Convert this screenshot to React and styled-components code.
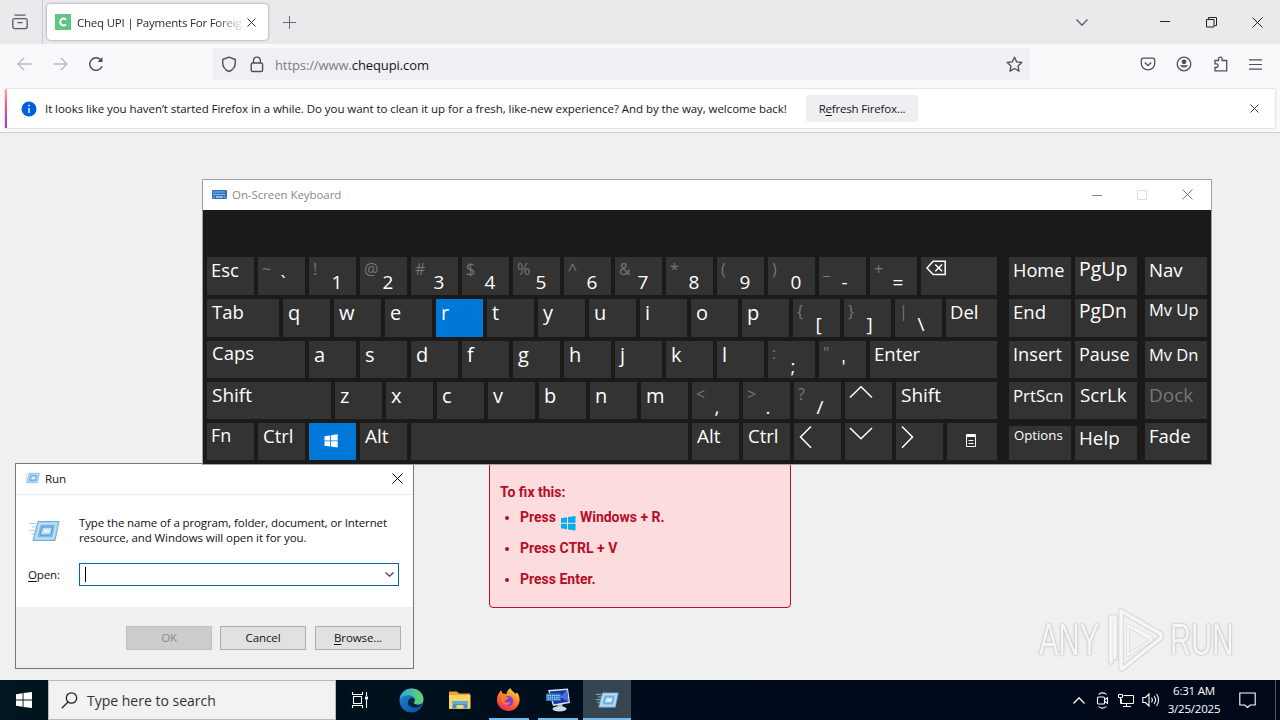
import styled, { createGlobalStyle } from 'styled-components';

const rows = [
	[
		{ label: 'Esc', w: 47 },
		{ dim: '~', main: '`' },
		{ dim: '!', main: '1' },
		{ dim: '@', main: '2' },
		{ dim: '#', main: '3' },
		{ dim: '$', main: '4' },
		{ dim: '%', main: '5' },
		{ dim: '^', main: '6' },
		{ dim: '&', main: '7' },
		{ dim: '*', main: '8' },
		{ dim: '(', main: '9' },
		{ dim: ')', main: '0' },
		{ dim: '_', main: '-' },
		{ dim: '+', main: '=' },
		{ icon: 'back', w: 76 },
	],
	[
		{ label: 'Tab', w: 72, x: 1 },
		...'qwertyuiop'.split('').map((c) => ({ letter: c, on: c === 'r' })),
		{ dim: '{', main: '[' },
		{ dim: '}', main: ']' },
		{ dim: '|', main: '\\' },
		{ label: 'Del', w: 51 },
	],
	[
		{ label: 'Caps', w: 98, x: 1, up: 1 },
		...'asdfghjkl'.split('').map((c) => ({ letter: c })),
		{ dim: ':', main: ';' },
		{ dim: '"', main: "'" },
		{ label: 'Enter', w: 127 },
	],
	[
		{ label: 'Shift', w: 124, size: 19, x: 1 },
		...'zxcvbnm'.split('').map((c) => ({ letter: c })),
		{ dim: '<', main: ',' },
		{ dim: '>', main: '.' },
		{ dim: '?', main: '/' },
		{ icon: 'up' },
		{ label: 'Shift', w: 101, size: 19, x: 1 },
	],
	[
		{ label: 'Fn', size: 18, up: 1 },
		{ label: 'Ctrl', x: 1 },
		{ icon: 'win', on: true },
		{ label: 'Alt', size: 19, x: 1 },
		{ w: 277 },
		{ label: 'Alt', size: 19, x: 1 },
		{ label: 'Ctrl', x: 1 },
		{ icon: 'left' },
		{ icon: 'down' },
		{ icon: 'right' },
		{ icon: 'menu', w: 50 },
	],
];

const navKeys = [
	[{ label: 'Home', size: 18.2 }, { label: 'PgUp', size: 19.5, up: 0.6 }, { label: 'Nav', size: 18.6 }],
	[{ label: 'End' }, { label: 'PgDn', size: 19.2, up: 0.6 }, { label: 'Mv Up', size: 16.5, up: 2 }],
	[{ label: 'Insert', size: 18.2 }, { label: 'Pause', size: 18 }, { label: 'Mv Dn', size: 16.5, up: -1 }],
	[{ label: 'PrtScn', size: 16.8, up: -1 }, { label: 'ScrLk', size: 18.8, x: 1 }, { label: 'Dock', size: 19, off: true }],
	[
		{ label: 'Options', size: 13.2, short: true, up: 4, x: 1 },
		{ label: 'Help', size: 18.8, short: true, up: 1 },
		{ label: 'Fade' },
	],
];

const KeyIcon = ({ name }) => {
	if (name === 'win') {
		return (
			<svg width='47' height='37' fill='#fff'>
				<path d='M15.500 13.200l5.600-.8v5.200h-5.600zM21.900 12.300l6.800-1v6.300h-6.800zM15.500 18.300h5.600v5.200l-5.600-.8zM21.900 18.300h6.800v6.300l-6.800-1z' />
			</svg>
		);
	}
	if (name === 'menu') {
		return (
			<svg width='50' height='37' fill='none' stroke='#fff'>
				<path d='M19.5 11.5h9v12h-9z' />
				<path d='M19 12.5h10M19 13.5h10M21.5 17.5h5M21.5 20.5h5' />
			</svg>
		);
	}
	const paths = {
		back: 'M6 11L12.200 4.200h12v13.300h-12zM14.300 7.500l6.800 6.800M21.100 7.500l-6.800 6.800',
		up: 'M5 15.500L16 4.700l11 10.800',
		down: 'M5 5L16 15.800 27 5',
		left: 'M17 3.500L6.500 14 17 24.700',
		right: 'M6 3.500L16.500 14 6 24.700',
	};
	return (
		<svg width='47' height='37' fill='none' stroke='#fff' strokeWidth='1.500'>
			<path d={paths[name]} />
		</svg>
	);
};

const KeyCap = ({ k, w }) => (
	<Key $w={k.w || w} $on={k.on} $short={k.short}>
		{k.label && (
			<Label $size={k.size} $up={k.up} $x={k.x} $off={k.off}>
				{k.label}
			</Label>
		)}
		{k.letter && <Letter>{k.letter}</Letter>}
		{k.dim && <Dim>{k.dim}</Dim>}
		{k.main && <Main>{k.main}</Main>}
		{k.icon && <KeyIcon name={k.icon} />}
	</Key>
);

const RunIcon = ({ size }) => (
	<svg width={size} height={size} viewBox='0 0 32 32'>
		<path d='M10 6.500h21l-4 19H5z' fill='#a9d3f0' stroke='#6aaedd' />
		<path d='M12 9h16l-3 14H8.500z' fill='#7fbbe6' stroke='#d6ebf9' />
		<path d='M14.500 12h10l-1.800 8H12z' fill='#bfdff5' stroke='#4b93cb' />
		<path d='M16.200 14.500h5.500l-.7 3h-5.500z' fill='#e8f4fc' />
		<path d='M1 8.500h7M4 12h4M1 15.500h6M3 19h3' stroke='#a9d3f0' />
	</svg>
);

const Chevron = ({ w, h, color, up, stroke = 1.3 }) => (
	<svg width={w} height={h} fill='none' stroke={color} strokeWidth={stroke}>
		<path d={up ? `M.5 ${h - 0.5}L${w / 2} .8 ${w - 0.5} ${h - 0.5}` : `M.5 .5L${w / 2} ${h - 0.8} ${w - 0.5} .5`} />
	</svg>
);

const Cross = ({ size, color }) => (
	<svg width={size} height={size} fill='none' stroke={color} strokeWidth='1'>
		<path d={`M.5 .5L${size - 0.5} ${size - 0.5}M${size - 0.5} .5L.5 ${size - 0.5}`} />
	</svg>
);

const Browser = () => (
	<BrowserWindow>
		<TabStrip>
			<FirefoxView>
				<svg width='16' height='16' fill='none' stroke='#5b5b66' strokeWidth='1.3'>
					<rect x='.8' y='4.6' width='14.4' height='10' rx='2' />
					<path d='M2.5 1.2h11M5.5 8.6h5' />
				</svg>
			</FirefoxView>
			<Tab>
				<Favicon>
					<svg width='16' height='16'>
						<path d='M11 5.6A3.4 3.4 0 1 0 11 10.4' fill='none' stroke='#fff' strokeWidth='2' />
					</svg>
				</Favicon>
				<TabTitle>Cheq UPI | Payments For Foreig</TabTitle>
				<Cross size={9} color='#3a3944' />
			</Tab>
			<NewTab>
				<svg width='13' height='13' stroke='#6b6b76'>
					<path d='M6.500 0v13M0 6.500h13' />
				</svg>
			</NewTab>
			<WindowControls>
				<Chevron w={12} h={7} color='#5b5b66' />
				<svg width='10' height='10' stroke='#222'>
					<path d='M0 4.500h10' />
				</svg>
				<svg width='11' height='11' fill='none' stroke='#222'>
					<path d='M.5 2.500h7.500v7.500h-7.500zM2.500 2.500v-2h8v8h-2' />
				</svg>
				<Cross size={11} color='#222' />
			</WindowControls>
		</TabStrip>
		<Toolbar>
			<NavButtons>
				<svg width='15' height='14' fill='none' stroke='#b9b9c1' strokeWidth='1.4'>
					<path d='M14.500 7H1M7 1L1 7l6 6' />
				</svg>
				<svg width='15' height='14' fill='none' stroke='#b9b9c1' strokeWidth='1.4'>
					<path d='M.5 7H14M8 1l6 6-6 6' />
				</svg>
				<svg width='16' height='16' fill='none' stroke='#4a4a54' strokeWidth='1.400'>
					<path d='M12.500 3.600A6.300 6.300 0 1 0 14 10.200' />
					<path d='M14.500 1v5h-5z' fill='#4a4a54' stroke='none' />
				</svg>
			</NavButtons>
			<UrlBar>
				<svg width='16' height='17' fill='none' stroke='#4f4f59' strokeWidth='1.4'>
					<path d='M8 1.200l6.300 2.300v3.300c0 4-2.500 7.200-6.300 8.700-3.800-1.500-6.300-4.700-6.300-8.700V3.500z' strokeLinejoin='round' />
				</svg>
				<svg width='14' height='17' fill='none' stroke='#4f4f59' strokeWidth='1.4'>
					<rect x='1.200' y='7' width='11.400' height='8.500' rx='1.500' />
					<path d='M3.500 7V4.500a3.400 3.400 0 0 1 6.800 0V7' />
				</svg>
				<Url>
					https://www.<b>chequpi.com</b>
				</Url>
				<svg width='17' height='17' fill='none' stroke='#4f4f59' strokeWidth='1.3' strokeLinejoin='round'>
					<path d='M8.500 1.200l2.200 4.700 5.100.6-3.800 3.500 1 5.100-4.500-2.600-4.500 2.600 1-5.100L1.200 6.500l5.100-.6z' />
				</svg>
			</UrlBar>
			<Actions>
				<svg width='16' height='16' fill='none' stroke='#4f4f59' strokeWidth='1.300'>
					<path d='M3 2.200h10a1.700 1.700 0 0 1 1.700 1.700V7.500a6.700 6.300 0 0 1-13.400 0V3.900A1.700 1.700 0 0 1 3 2.200z' />
					<path d='M4.800 6.500L8 9.500l3.200-3' />
				</svg>
				<svg width='16' height='16'>
					<circle cx='8' cy='8' r='6.800' fill='none' stroke='#4f4f59' strokeWidth='1.300' />
					<circle cx='8' cy='5.800' r='2.400' fill='#4f4f59' />
					<path d='M3.800 9.200h8.400a4.700 4.200 0 0 1-8.400 0z' fill='#4f4f59' />
				</svg>
				<svg width='16' height='16' fill='none' stroke='#4f4f59' strokeWidth='1.300'>
					<path d='M2 4.500h3.500V3a1.800 1.800 0 0 1 3.600 0v1.500h4.600v10.300H2V11.500h1.300a1.800 1.800 0 0 0 0-3.600H2z' />
				</svg>
				<svg width='13' height='11' stroke='#4f4f59' strokeWidth='1.200'>
					<path d='M0 .9h13M0 5.500h13M0 10.100h13' />
				</svg>
			</Actions>
		</Toolbar>
		<NoticeArea>
			<Notice>
				<svg width='16' height='16'>
					<circle cx='8' cy='8' r='7.500' fill='#0060df' />
					<path d='M8 7v5' stroke='#fff' strokeWidth='1.400' />
					<circle cx='8' cy='4.600' r='.9' fill='#fff' />
				</svg>
				<NoticeText>
					It looks like you haven’t started Firefox in a while. Do you want to clean it up for a fresh, like-new experience? And by
					the way, welcome back!
				</NoticeText>
				<RefreshButton>
					<span>
						R<u>e</u>fresh Firefox...
					</span>
				</RefreshButton>
				<Cross size={9} color='#3a3944' />
			</Notice>
		</NoticeArea>
		<Page>
			<FixBox>
				<p>To fix this:</p>
				<ul>
					<li>
						Press{' '}
						<svg width='16' height='16' fill='#00adef'>
							<path d='M1 3.200l6-.9v5.500H1zM8 2.100L15.500 1v6.800H8zM1 8.700h6v5.500l-6-.9zM8 8.700h7.500v6.800L8 14.400z' />
						</svg>{' '}
						Windows + R.
					</li>
					<li>Press CTRL + V</li>
					<li>Press Enter.</li>
				</ul>
			</FixBox>
		</Page>
	</BrowserWindow>
);

const RunDialog = () => (
	<RunWindow>
		<RunTitle>
			<RunIcon size={16} />
			<span>Run</span>
			<Cross size={11} color='#000' />
		</RunTitle>
		<RunBody>
			<RunIntro>
				<RunIcon size={32} />
				<p>
					Type the name of a program, folder, document, or Internet
					<br />
					<RunSecondLine>resource, and Windows will open it for you.</RunSecondLine>
				</p>
			</RunIntro>
			<OpenRow>
				<span>
					<u>O</u>pen:
				</span>
				<Combo>
					<Caret />
					<Chevron w={9} h={5} color='#444' />
				</Combo>
			</OpenRow>
		</RunBody>
		<RunFooter>
			<RunButton $off>OK</RunButton>
			<RunButton>Cancel</RunButton>
			<RunButton $last>
				<u>B</u>rowse...
			</RunButton>
		</RunFooter>
	</RunWindow>
);

const Keyboard = () => (
	<KeyboardWindow>
		<KeyboardTitle>
			<svg width='15' height='9'>
				<rect width='15' height='9' rx='1' fill='#2b6fc0' />
				<path d='M1.500 2h12M1.500 4.500h12' stroke='#fff' strokeDasharray='1 1' />
				<path d='M1.500 7h1M4 7h7M12.500 7h1' stroke='#fff' />
			</svg>
			<span>On-Screen Keyboard</span>
			<KeyboardControls>
				<svg width='10' height='10' stroke='#888'>
					<path d='M0 5.500h10' />
				</svg>
				<svg width='10' height='10' fill='none' stroke='#ddd'>
					<path d='M.5 .5h9v9h-9z' />
				</svg>
				<Cross size={11} color='#777' />
			</KeyboardControls>
		</KeyboardTitle>
		<KeyArea>
			<MainKeys>
				{rows.map((row, i) => (
					<KeyRow key={i} $h={i < 2 ? 38 : 37}>
						{row.map((k, j) => (
							<KeyCap key={j} k={k} w={47} />
						))}
					</KeyRow>
				))}
			</MainKeys>
			<SideKeys>
				{navKeys.map((row, i) => (
					<KeyRow key={i} $h={i < 2 ? 38 : 37} $side>
						{row.map((k) => (
							<KeyCap key={k.label} k={k} w={62} />
						))}
					</KeyRow>
				))}
			</SideKeys>
		</KeyArea>
	</KeyboardWindow>
);

const Watermark = () => (
	<Mark>
		<span>ANY</span>
		<svg width='58' height='66' fill='none' strokeLinejoin='round' strokeLinecap='round'>
			<path d='M14 61V4l40 23v4L15 62M4 55V10h4v41' stroke='#d6d6d6' strokeWidth='5.500' />
			<path d='M14 61V4l40 23v4L15 62M4 55V10h4v41' stroke='#f6f6f6' strokeWidth='3.500' />
			<path d='M21 19v29l24-15zM21 19l24 11' stroke='#d9d9d9' strokeWidth='3.500' />
			<path d='M21 19v29l24-15zM21 19l24 11' stroke='#f8f8f8' strokeWidth='2' />
		</svg>
		<span>RUN</span>
	</Mark>
);

const Taskbar = () => (
	<Bar>
		<Start>
			<svg width='16' height='16' fill='#fff'>
				<path d='M0 2.200l6.600-.9v6.200H0zM7.500 1.100L16 0v7.500H7.500zM0 8.500h6.600v6.200L0 13.800zM7.500 8.500H16V16l-8.500-1.100z' />
			</svg>
		</Start>
		<Search>
			<svg width='17' height='17' fill='none' stroke='#222' strokeWidth='1.300'>
				<circle cx='10.500' cy='6' r='5.200' />
				<path d='M7 10L.8 16.300' />
			</svg>
			<span>Type here to search</span>
		</Search>
		<Task $w={48}>
			<svg width='18' height='16' fill='none' stroke='#fff' strokeWidth='1.100'>
				<path d='M1.500 0v2.500h10V0M1.500 16v-2.500h10V16M2.500 4.500h8v7h-8zM15.500 0v4M15.500 8v8' />
				<path d='M14 4.500h3v3h-3z' fill='#fff' stroke='none' />
			</svg>
		</Task>
		<Task $w={54}>
			<svg width='25' height='25' viewBox='0 0 24 24'>
				<defs>
					<linearGradient id='edgeTop' x1='0' x2='1'>
						<stop offset='0' stopColor='#2aa9dc' />
						<stop offset='1' stopColor='#66d663' />
					</linearGradient>
					<linearGradient id='edgeSide' x2='1' y2='1'>
						<stop offset='0' stopColor='#1b8bd8' />
						<stop offset='1' stopColor='#0d4a92' />
					</linearGradient>
				</defs>
				<circle cx='12' cy='12' r='11.500' fill='url(#edgeSide)' />
				<path d='M.6 11C1.500 4.500 6.500.5 12 .5c6.500 0 11.500 4.700 11.500 10 0 3.500-2.500 5.500-5.500 5.500-2.500 0-3.800-1-3.800-1.800 0-.7 1-1.200 1-3 0-2.200-2.300-4.300-5.700-4.300C5.500 6.900 2 9 .6 11z' fill='url(#edgeTop)' />
				<path d='M8.500 14c0-2 1.500-4 3.700-4.600 1.600.1 3 1 3 2.200 0 1.300-1 1.800-1 2.600 0 1 1.500 1.900 4 1.900 2 0 3.300-.4 4.200-1-.9 1.800-2.300 3-4.400 3.400C13.500 19.400 8.500 18 8.500 14z' fill='#06243c' />
			</svg>
		</Task>
		<Task $w={43}>
			<svg width='22' height='20'>
				<path d='M0 1.500h8l2 2h11V19H0z' fill='#e9a825' />
				<path d='M0 5h21.500v13.500H0z' fill='#fbd566' />
				<path d='M3.500 18.500V11h15v7.500h-4V15h-7v3.500z' fill='#3f94d1' />
				<path d='M3.500 11h15v3h-15z' fill='#60aede' />
			</svg>
		</Task>
		<Task $w={55} $open>
			<svg width='25' height='24'>
				<defs>
					<linearGradient id='fox' x1='.8' x2='.3' y2='1'>
						<stop offset='0' stopColor='#ffe441' />
						<stop offset='.4' stopColor='#ff8a20' />
						<stop offset='1' stopColor='#f0235b' />
					</linearGradient>
				</defs>
				<path d='M3 5l2-3 1.500 3.500 4 .5c.5-2.500 2-5 4-6 .3 2.500 4 4 5 6l1.500-1.500c2 2.500 3 5.500 2.500 8.500-.8 6-5.500 10-11 10S1.500 19 1 13C.8 10 1.500 7 3 5z' fill='url(#fox)' />
				<circle cx='12.300' cy='13' r='5' fill='#7a3fe0' />
				<path d='M6 7.500c3 0 4 1.500 7 2.200-1 2-3.500 1.500-4.500 3.500 1 2 5 1.500 6 .3 0 3.500-5 4.500-7.500 1.800C5.500 13.500 5 10 6 7.500z' fill='#ff7a2b' />
			</svg>
		</Task>
		<Task $w={44} $open>
			<svg width='26' height='24'>
				<path d='M12 15l5-1 1 7h-5z' fill='#aeb7bf' />
				<ellipse cx='14.500' cy='20.800' rx='7' ry='2.600' fill='#d3d8dc' />
				<path d='M3 2L23 .5l2 14.500-17 3z' fill='#dce6ef' />
				<path d='M4.500 3.400l17.500-1.500 1.500 11.800-14.500 2.500z' fill='#1a35a8' />
				<path d='M15 9l7-7 1.500 11.700z' fill='#496fdc' />
				<rect x='1' y='5.500' width='15' height='7.500' rx='1' fill='#287bc6' />
				<path d='M2.500 7.500h12M2.500 9.300h12M2.500 11.200h12' stroke='#cfe4f7' strokeDasharray='1.200 1' />
			</svg>
		</Task>
		<Task $w={48} $active>
			<RunIcon size={24} />
		</Task>
		<Tray>
			<Chevron w={12} h={7} color='#fff' up />
			<svg width='14' height='17' fill='none' stroke='#fff' strokeWidth='1.100'>
				<rect x='1.500' y='5' width='7' height='7' rx='1' />
				<path d='M8.500 7.700l3-2v5.600l-3-2M2.500 2.500C4.500.3 8.500.3 10.500 2.500M2.500 14.500c2 2.200 6 2.200 8 0' />
			</svg>
			<svg width='17' height='15' fill='none' stroke='#fff'>
				<path d='M5.500 2.500h10v8h-12V6M8.500 10.500v3M5 13.500h8' />
				<path d='M.5 1.500h4v3h-4zM2.500 4.500v6h2' />
			</svg>
			<svg width='18' height='14' fill='none' stroke='#fff' strokeWidth='1.100'>
				<path d='M.8 4.500h2.700L7 1v12L3.500 9.500H.8zM9.500 4.800c1 1.300 1 3.200 0 4.500M12 3c2 2.500 2 5.500 0 8M14.500 1c2.700 3.500 2.700 8.500 0 12' />
			</svg>
		</Tray>
		<Clock>
			<span>6:31 AM</span>
			<span>3/25/2025</span>
		</Clock>
		<Notifications>
			<svg width='17' height='17' fill='none' stroke='#fff' strokeWidth='1.100'>
				<path d='M.8 1h15.400v12h-5L8.500 15.500 5.800 13h-5z' />
			</svg>
		</Notifications>
	</Bar>
);

const App = () => (
	<Desktop>
		<GlobalStyle />
		<Browser />
		<RunDialog />
		<Keyboard />
		<Watermark />
		<Taskbar />
	</Desktop>
);

const GlobalStyle = createGlobalStyle`
	* {
		box-sizing: border-box;
	}

	body {
		margin: 0;
		font-family: 'Open Sans', 'Noto Sans', sans-serif;
	}

	p, ul {
		margin: 0;
		padding: 0;
	}

	svg {
		flex: none;
		display: block;
	}

	u {
		text-underline-offset: 2px;
	}
`;

const Desktop = styled.div`
	position: relative;
	width: 1280px;
	height: 720px;
	overflow: hidden;
	display: flex;
	flex-direction: column;
	white-space: nowrap;
`;

const BrowserWindow = styled.div`
	flex: 1;
	display: flex;
	flex-direction: column;
	background: #f9f9fb;
`;

const TabStrip = styled.div`
	height: 44px;
	background: #eaeaed;
	display: flex;
	align-items: center;
`;

const FirefoxView = styled.div`
	width: 43px;
	height: 44px;
	padding: 14px 0 0 12px;
	border-right: 1px solid #c9c9ce;
`;

const Tab = styled.div`
	width: 221px;
	height: 36px;
	margin-left: 4px;
	padding: 0 11px 0 8px;
	border-radius: 4px;
	background: #fff;
	box-shadow: 0 0 3px rgba(0, 0, 0, 0.4);
	display: flex;
	align-items: center;
`;

const Favicon = styled.div`
	width: 16px;
	height: 16px;
	background: #62c584;
`;

const TabTitle = styled.div`
	width: 168px;
	margin: 0 2px 0 6px;
	font-size: 11.5px;
	letter-spacing: -0.22px;
	color: #2b2a33;
	mask-image: linear-gradient(to left, transparent, #000 30px);
`;

const NewTab = styled.div`
	margin-left: 15px;
`;

const WindowControls = styled.div`
	margin: 0 17px 0 auto;
	display: flex;
	align-items: center;

	svg:nth-child(2) {
		margin-left: 72px;
	}

	svg:nth-child(3) {
		margin-left: 36px;
	}

	svg:nth-child(4) {
		margin-left: 35px;
	}
`;

const Toolbar = styled.div`
	height: 40px;
	display: flex;
	align-items: center;
`;

const NavButtons = styled.div`
	width: 213px;
	padding-left: 17px;
	display: flex;
	align-items: center;
	gap: 20.5px;
`;

const UrlBar = styled.div`
	width: 817px;
	height: 32px;
	padding: 0 7px 0 8px;
	background: #f0f0f4;
	display: flex;
	align-items: center;
	gap: 13px;
`;

const Url = styled.div`
	flex: 1;
	margin: 2px 0 0 -2px;
	font-size: 13px;
	letter-spacing: -0.1px;
	color: #7c7c85;

	b {
		font-weight: 400;
		color: #15141a;
	}
`;

const Actions = styled.div`
	flex: 1;
	padding: 0 18px 0 110px;
	display: flex;
	align-items: center;
	justify-content: space-between;
`;

const NoticeArea = styled.div`
	height: 49px;
	padding: 5px 5px 5px;
	border-bottom: 1px solid #ccccd0;
`;

const Notice = styled.div`
	height: 39px;
	padding: 0 16px 0 14px;
	border-left: 2px solid;
	border-image: linear-gradient(#ffb173, #f2558f 40%, #8341ca) 1;
	background: #fff;
	box-shadow: 0 0 2px rgba(0, 0, 0, 0.25);
	display: flex;
	align-items: center;

	> svg:last-child {
		margin-left: auto;
	}
`;

const NoticeText = styled.div`
	margin-left: 8px;
	width: 761px;
	font-size: 11.5px;
	letter-spacing: -0.058px;
	color: #15141a;
`;

const RefreshButton = styled.div`
	width: 112px;
	height: 27px;
	border-radius: 3px;
	background: #efeff2;
	display: flex;
	align-items: center;
	justify-content: center;
	font-size: 11.5px;
	letter-spacing: -0.18px;
	color: #15141a;
`;

const Page = styled.div`
	flex: 1;
	padding: 150px 0 0 489px;
	background: #f0f0f0;
`;

const FixBox = styled.div`
	width: 302px;
	height: 325px;
	padding: 200px 10px 0;
	border: 1px solid #b5142e;
	border-radius: 4px;
	background: #fddcdd;
	font: 700 14px/17px Roboto, sans-serif;
	color: #b50d28;

	ul {
		padding: 8px 0 0 20px;
	}

	li {
		height: 17px;
		margin-bottom: 14px;
	}

	svg {
		display: inline-block;
		vertical-align: -9px;
		margin: 0 0.5px;
	}
`;

const RunWindow = styled.div`
	position: absolute;
	left: 15px;
	top: 463px;
	width: 399px;
	height: 206px;
	border: 1px solid #777;
	background: #fff;
	display: flex;
	flex-direction: column;
	font-size: 11.5px;
	letter-spacing: -0.12px;
	color: #111;
`;

const RunTitle = styled.div`
	height: 31px;
	padding: 0 10px 2px 8px;
	border-bottom: 1px solid #ececec;
	display: flex;
	align-items: center;

	span {
		flex: 1;
		margin-left: 5px;
	}
`;

const RunBody = styled.div`
	flex: 1;
	padding: 20px 14px 0 12px;
`;

const RunIntro = styled.div`
	display: flex;
	gap: 19px;
	line-height: 15px;
`;

const RunSecondLine = styled.span`
	letter-spacing: -0.08px;
`;

const OpenRow = styled.div`
	margin-top: 16px;
	display: flex;
	align-items: center;
	justify-content: space-between;
`;

const Combo = styled.div`
	width: 320px;
	height: 23px;
	padding: 0 4px 0 5px;
	border: 1px solid #0067b3;
	display: flex;
	align-items: center;
	justify-content: space-between;
`;

const Caret = styled.div`
	width: 1px;
	height: 15px;
	background: #000;
`;

const RunFooter = styled.div`
	height: 61px;
	padding: 19px 12px 0;
	background: #f0f0f0;
	display: flex;
	justify-content: flex-end;
	gap: 8px;
`;

const RunButton = styled.div`
	width: 86px;
	height: 24px;
	margin-left: ${(p) => (p.$last ? 1 : 0)}px;
	padding: 0 0 2px;
	border: 1px solid ${(p) => (p.$off ? '#bfbfbf' : '#adadad')};
	background: ${(p) => (p.$off ? '#cccccc' : '#e1e1e1')};
	color: ${(p) => (p.$off ? '#8a8a8a' : '#111')};
	display: flex;
	align-items: center;
	justify-content: center;
`;

const KeyboardWindow = styled.div`
	position: absolute;
	left: 202px;
	top: 179px;
	width: 1010px;
	height: 286px;
	border: 1px solid #a0a0a0;
	background: #1a1a1a;
`;

const KeyboardTitle = styled.div`
	height: 30px;
	padding: 0 18px 1px 9px;
	background: #fff;
	display: flex;
	align-items: center;
	font-size: 11.5px;
	letter-spacing: -0.07px;
	color: #8a8a8a;

	span {
		margin-left: 5px;
	}
`;

const KeyboardControls = styled.div`
	margin-left: auto;
	display: flex;
	align-items: center;
	gap: 35px;
`;

const KeyArea = styled.div`
	padding: 47px 4px 0;
	display: flex;
	justify-content: space-between;
`;

const MainKeys = styled.div`
	display: flex;
	flex-direction: column;
	gap: 4px;
`;

const SideKeys = styled(MainKeys)``;

const KeyRow = styled.div`
	height: ${(p) => p.$h}px;
	display: flex;
	align-items: flex-end;
	gap: 4px;

	> :last-child {
		margin-left: ${(p) => (p.$side ? 4 : 0)}px;
	}
`;

const Key = styled.div`
	width: ${(p) => p.$w}px;
	height: ${(p) => (p.$short ? '34px' : '100%')};
	background: ${(p) => (p.$on ? '#0078d7' : '#333')};
	color: #fff;
	display: flex;
`;

const Label = styled.span`
	margin: ${(p) => 1 - (p.$up || 0)}px 0 0 ${(p) => 4 + (p.$x || 0)}px;
	font-size: ${(p) => p.$size || 18.5}px;
	line-height: 24px;
	color: ${(p) => (p.$off ? '#777' : '#fff')};
`;

const Letter = styled.span`
	margin: 1px 0 0 5px;
	font-size: 20px;
	line-height: 26px;
`;

const Dim = styled.span`
	width: 18.5px;
	margin: 0 0 0 4px;
	font-size: 16px;
	line-height: 24px;
	color: #777;
`;

const Main = styled.span`
	margin-top: 12px;
	font-size: 19px;
	line-height: 26px;
`;

const Mark = styled.div`
	position: absolute;
	left: 1039px;
	top: 607px;
	display: flex;
	align-items: center;
	gap: 5px;

	span {
		display: block;
		width: 63px;
		font: 400 45px/60px 'Liberation Sans', sans-serif;
		color: #f6f6f6;
		text-shadow: 0 0 3px #a5a5a5, 0 0 1px #ccc;
		transform: scaleX(0.65);
		transform-origin: left;
	}
`;

const Bar = styled.div`
	height: 40px;
	background: linear-gradient(to right, #00171f, #000a1c 60%, #000819);
	display: flex;
`;

const Start = styled.div`
	width: 48px;
	display: grid;
	place-items: center;
`;

const Search = styled.div`
	width: 288px;
	padding-left: 12px;
	border: 1px solid #b9b9b9;
	background: #f2f2f2;
	display: flex;
	align-items: center;
	gap: 9px;
	font-size: 14px;
	color: #333;
`;

const Task = styled.div`
	width: ${(p) => p.$w}px;
	margin-left: ${(p) => (p.$active ? 3 : 0)}px;
	background: ${(p) => (p.$active ? '#36454f' : 'none')};
	box-shadow: ${(p) => (p.$active ? 'inset 0 -2px #76b9ed' : 'none')};
	display: grid;
	place-items: center;
	background-image: ${(p) => (p.$open ? 'linear-gradient(#76b9ed, #76b9ed)' : 'none')};
	background-size: 40px 2px;
	background-position: bottom;
	background-repeat: no-repeat;
`;

const Tray = styled.div`
	margin: 0 -1px 0 auto;
	display: flex;
	align-items: center;
	gap: 7px;

	svg:nth-child(2) {
		margin: 0 1px 0 4px;
	}
`;

const Clock = styled.div`
	width: 70px;
	padding-top: 2px;
	display: flex;
	flex-direction: column;
	align-items: center;
	font-size: 11.5px;
	letter-spacing: -0.2px;
	line-height: 18px;
	color: #fff;
`;

const Notifications = styled.div`
	width: 47px;
	margin-right: 4px;
	padding-left: 10px;
	border-right: 1px solid #4a5260;
	display: flex;
	align-items: center;
`;

export default App;
